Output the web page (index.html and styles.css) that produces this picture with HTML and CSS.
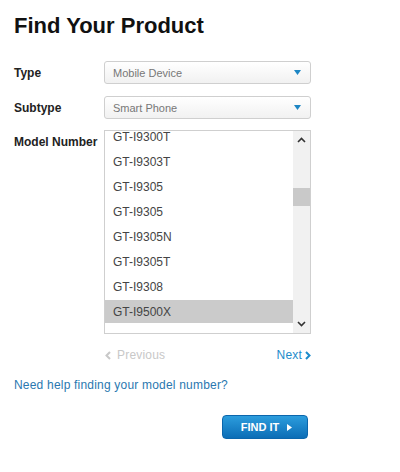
FILE: index.html
```html
<!DOCTYPE html>
<html>
<head>
<meta charset="utf-8">
<link rel="stylesheet" href="styles.css">
</head>
<body>
<div class="page">
  <h1 class="title">Find Your Product</h1>
  <div class="form">
    <div class="row">
      <span class="label">Type</span>
      <div class="select"><span class="select-text">Mobile Device</span><svg class="caret" width="7" height="5" viewBox="0 0 7 5"><path d="M0 0H7L3.5 5Z" fill="#1d86c4"/></svg></div>
    </div>
    <div class="row">
      <span class="label">Subtype</span>
      <div class="select"><span class="select-text">Smart Phone</span><svg class="caret" width="7" height="5" viewBox="0 0 7 5"><path d="M0 0H7L3.5 5Z" fill="#1d86c4"/></svg></div>
    </div>
    <div class="row row-top">
      <span class="label label-top">Model Number</span>
      <div class="listbox">
        <div class="list-view">
          <ul class="items">
            <li class="item">GT-I9300T</li>
            <li class="item">GT-I9303T</li>
            <li class="item">GT-I9305</li>
            <li class="item">GT-I9305</li>
            <li class="item">GT-I9305N</li>
            <li class="item">GT-I9305T</li>
            <li class="item">GT-I9308</li>
            <li class="item item-selected">GT-I9500X</li>
          </ul>
        </div>
        <div class="scrollbar">
          <svg class="sb-arrow" width="9" height="6" viewBox="0 0 9 6"><path d="M1 5L4.5 1.5L8 5" fill="none" stroke="#333" stroke-width="1.6"/></svg>
          <div class="sb-track"><div class="sb-thumb"></div></div>
          <svg class="sb-arrow" width="9" height="6" viewBox="0 0 9 6"><path d="M1 1L4.5 4.5L8 1" fill="none" stroke="#333" stroke-width="1.6"/></svg>
        </div>
      </div>
    </div>
    <div class="pager">
      <span class="prev"><svg width="6" height="9" viewBox="0 0 6 9"><path d="M5 1L1.5 4.5L5 8" fill="none" stroke="#c8c8c8" stroke-width="2"/></svg>Previous</span>
      <span class="next">Next<svg width="6" height="9" viewBox="0 0 6 9"><path d="M1 1L4.5 4.5L1 8" fill="none" stroke="#1d8ccb" stroke-width="2"/></svg></span>
    </div>
  </div>
  <a class="help" href="#">Need help finding your model number?</a>
  <div class="actions">
    <button class="find">FIND IT<svg width="5" height="7" viewBox="0 0 5 7"><path d="M0 0L5 3.5L0 7Z" fill="#fff"/></svg></button>
  </div>
</div>
</body>
</html>
```
FILE: styles.css
```css
* { box-sizing: border-box; }
html, body { margin: 0; padding: 0; background: #fff; }
body { font-family: "Liberation Sans", Arial, sans-serif; }
.page { padding: 14px 0 0 14px; }
.title {
  margin: 0;
  font-size: 22px;
  line-height: 24px;
  font-weight: bold;
  color: #111;
  letter-spacing: 0;
}
.form { margin-top: 23px; display: flex; flex-direction: column; gap: 12px; }
.row { display: flex; align-items: center; }
.row-top { align-items: flex-start; margin-top: -1px; }
.label {
  width: 90px;
  font-size: 12px;
  font-weight: bold;
  color: #222;
  line-height: 14px;
}
.label-top { padding-top: 5px; }
.select {
  width: 207px;
  height: 23px;
  border: 1px solid #cfcfcf;
  border-radius: 3px;
  background: linear-gradient(#ffffff, #f1f1f1);
  display: flex;
  align-items: center;
  justify-content: space-between;
  padding: 0 9px 0 8px;
}
.select-text { font-size: 11px; color: #777; }
.caret { display: block; }
.listbox {
  width: 207px;
  height: 204px;
  border: 1px solid #cfcfcf;
  display: flex;
  background: #fff;
}
.list-view { flex: 1; overflow: hidden; }
.items { list-style: none; margin: -6px 0 0 0; padding: 0; }
.item {
  height: 25px;
  line-height: 25px;
  padding-left: 8px;
  font-size: 12px;
  color: #444;
}
.item-selected { background: #cbcbcb; height: 23px; line-height: 24px; }
.scrollbar {
  width: 17px;
  background: #f1f1f1;
  display: flex;
  flex-direction: column;
  align-items: center;
}
.sb-arrow { display: block; margin: 6px 0; }
.sb-track { flex: 1; width: 100%; }
.sb-thumb { margin-top: 39px; height: 18px; background: #c9c9c9; }
.pager {
  margin-left: 90px;
  width: 207px;
  display: flex;
  justify-content: space-between;
  font-size: 12px;
  line-height: 14px;
  letter-spacing: 0.2px;
  margin-top: 2px;
}
.prev { color: #c8c8c8; display: flex; align-items: center; gap: 6px; padding-left: 1px; }
.next { color: #1d8ccb; display: flex; align-items: center; gap: 3px; }
.help {
  display: block;
  margin-top: 16px;
  font-size: 12px;
  line-height: 14px;
  letter-spacing: 0.2px;
  color: #2a78b0;
  text-decoration: none;
}
.actions { margin-top: 23px; padding-left: 208px; }
.find {
  width: 86px;
  height: 24px;
  border: 1px solid #0b66ac;
  border-radius: 4px;
  background: linear-gradient(#2c9ddd, #0b6db6);
  color: #fff;
  font-family: "Liberation Sans", Arial, sans-serif;
  font-weight: bold;
  font-size: 11px;
  display: flex;
  align-items: center;
  justify-content: center;
  gap: 8px;
  padding: 0 0 0 3px;
}
.find svg { display: block; }
```
